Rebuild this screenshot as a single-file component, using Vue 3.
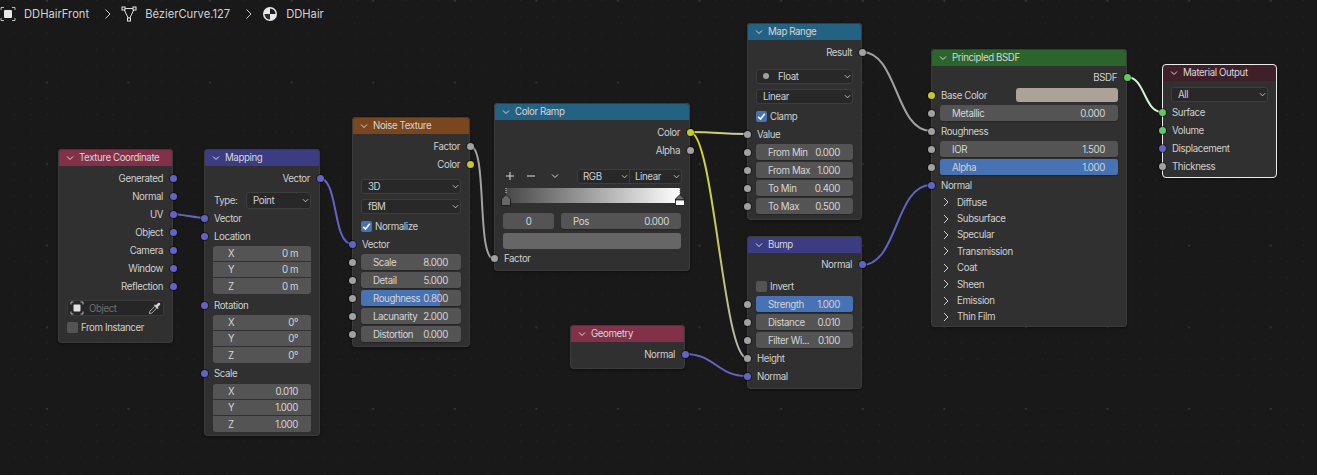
<script setup>
const out = (label, s = 'vec') => ({ t: 'out', label, s })
const inp = (label, s = 'grey') => ({ t: 'in', label, s })
const num = (label, val, s = 'grey', fill = 0) => ({ t: 'field', label, val, s, fill })
const sp = (h) => ({ t: 'sp', h })
const sel = (label, dot = false) => ({ t: 'select', label, dot })
const check = (label, on) => ({ t: 'check', label, on })
const xyz = (x, y, z) => ({ t: 'group', items: [['X', x], ['Y', y], ['Z', z]] })
const panel = (label) => ({ t: 'panel', label })

const nodes = [
  {
    title: 'Texture Coordinate', kind: 'input', x: 58, y: 149, w: 115,
    rows: [
      sp(3), out('Generated'), out('Normal'), out('UV'), out('Object'), out('Camera'), out('Window'), out('Reflection'),
      sp(5), { t: 'object' }, sp(2), check('From Instancer', false), sp(7)
    ]
  },
  {
    title: 'Mapping', kind: 'vector', x: 204, y: 149, w: 116,
    rows: [
      sp(3), out('Vector'), sp(4), { t: 'type' }, inp('Vector', 'vec'), inp('Location', 'vec'),
      sp(1), xyz('0 m', '0 m', '0 m'), sp(2), inp('Rotation', 'vec'),
      sp(1), xyz('0°', '0°', '0°'), sp(1), inp('Scale', 'vec'),
      sp(2), xyz('0.010', '1.000', '1.000'), sp(4)
    ]
  },
  {
    title: 'Noise Texture', kind: 'texture', x: 352, y: 117, w: 118,
    rows: [
      sp(3), out('Factor', 'grey'), out('Color', 'col'), sp(3), sel('3D'), sel('fBM'), sp(1), check('Normalize', true),
      inp('Vector', 'vec'), num('Scale', '8.000'), num('Detail', '5.000'), num('Roughness', '0.800', 'grey', 79),
      num('Lacunarity', '2.000'), num('Distortion', '0.000'), sp(4)
    ]
  },
  {
    title: 'Color Ramp', kind: 'convert', x: 494, y: 103, w: 196,
    rows: [sp(3), out('Color', 'col'), out('Alpha', 'grey'), sp(9), { t: 'ramp' }, inp('Factor'), sp(4)]
  },
  {
    title: 'Map Range', kind: 'convert', x: 747, y: 23, w: 115,
    rows: [
      sp(3), out('Result', 'grey'), sp(5), sel('Float', true), sel('Linear'), sp(1), check('Clamp', true), inp('Value'),
      num('From Min', '0.000'), num('From Max', '1.000'), num('To Min', '0.400'), num('To Max', '0.500'), sp(5)
    ]
  },
  {
    title: 'Geometry', kind: 'input', x: 570, y: 325, w: 115,
    rows: [sp(3), out('Normal'), sp(6)]
  },
  {
    title: 'Bump', kind: 'vector', x: 747, y: 236, w: 115,
    rows: [
      sp(2), out('Normal'), sp(4), check('Invert', false), num('Strength', '1.000', 'grey', 100),
      num('Distance', '0.010'), num('Filter Wi...', '0.100'), inp('Height'), inp('Normal', 'vec'), sp(4)
    ]
  },
  {
    title: 'Principled BSDF', kind: 'shader', x: 931, y: 49, w: 196,
    rows: [
      sp(2), out('BSDF', 'sh'), { t: 'color', label: 'Base Color' }, num('Metallic', '0.000'), inp('Roughness'),
      num('IOR', '1.500'), num('Alpha', '1.000', 'grey', 100), inp('Normal', 'vec'),
      panel('Diffuse'), panel('Subsurface'), panel('Specular'), panel('Transmission'),
      panel('Coat'), panel('Sheen'), panel('Emission'), panel('Thin Film'), sp(2)
    ]
  },
  {
    title: 'Material Output', kind: 'output', x: 1162, y: 64, w: 115, selected: true,
    rows: [
      sp(4), { t: 'plain', label: 'All' }, inp('Surface', 'sh'), inp('Volume', 'sh'),
      inp('Displacement', 'vec'), inp('Thickness'), sp(3)
    ]
  }
]

const wire = (x1, y1, x2, y2, d) => `M${x1} ${y1}C${x1 + d} ${y1} ${x2 - d} ${y2} ${x2} ${y2}`

const wires = [
  { d: wire(172, 214, 205, 218, 8), c: '#6363c7' },
  { d: wire(319, 178, 352, 244, 20), c: '#6363c7' },
  { d: wire(470, 146, 494, 259, 18), c: '#a1a1a1' },
  { d: wire(690, 132, 747, 358, 24), c: 'url(#yg)' },
  { d: wire(690, 132, 747, 134, 28), c: 'url(#yw)' },
  { d: wire(862, 52, 931, 131, 36), c: '#a1a1a1' },
  { d: wire(685, 354, 747, 376, 30), c: '#6363c7' },
  { d: wire(862, 265, 931, 185, 36), c: '#6363c7' },
  { d: wire(1127, 77, 1162, 112, 18), c: '#d4f2d4' }
]
</script>

<template>
  <div class="canvas">
    <div class="crumbs">
      <svg class="ic" viewBox="0 0 16 16" width="16" height="16" fill="none">
        <rect x="4" y="4" width="8" height="8" rx="1" fill="#e8e8e8" />
        <path d="M1 4V1.500H4M12 1.500H15V4M15 12V14.500H12M4 14.500H1V12" stroke="#bdbdbd" stroke-width="1" />
      </svg>
      <span class="crumb">DDHairFront</span>
      <svg class="sep" viewBox="0 0 8 12" width="8" height="12" fill="none"><path d="M1.500 1.500L6 6L1.500 10.500" stroke="#c8c8c8" stroke-width="1" /></svg>
      <svg class="ic" viewBox="0 0 16 16" width="16" height="16" fill="none">
        <path d="M2.500 2.500H13.500L8 13.500Z" stroke="#dcdcdc" stroke-width="1" />
        <rect x="1" y="1" width="3" height="3" fill="#1a1a1a" stroke="#e8e8e8" />
        <rect x="12" y="1" width="3" height="3" fill="#1a1a1a" stroke="#e8e8e8" />
        <rect x="6.500" y="12" width="3" height="3" fill="#1a1a1a" stroke="#e8e8e8" />
      </svg>
      <span class="crumb">BézierCurve.127</span>
      <svg class="sep" viewBox="0 0 8 12" width="8" height="12" fill="none"><path d="M1.500 1.500L6 6L1.500 10.500" stroke="#c8c8c8" stroke-width="1" /></svg>
      <svg class="ic" viewBox="0 0 16 16" width="16" height="16">
        <circle cx="8" cy="8" r="7" fill="#e8e8e8" />
        <path d="M8 2.500A5.500 5.500 0 0 1 13.500 8H8Z" fill="#1c1c1c" />
        <path d="M8 8H2.500A5.500 5.500 0 0 0 8 13.500Z" fill="#2c2c2c" />
      </svg>
      <span class="crumb">DDHair</span>
    </div>

    <svg class="wires" width="1317" height="475" fill="none">
      <defs>
        <linearGradient id="yg" gradientUnits="userSpaceOnUse" x1="690" y1="132" x2="747" y2="358">
          <stop offset="0" stop-color="#d6d62e" />
          <stop offset="0.55" stop-color="#c4c46a" />
          <stop offset="1" stop-color="#b4b4b4" />
        </linearGradient>
        <linearGradient id="yw" gradientUnits="userSpaceOnUse" x1="690" y1="132" x2="747" y2="134">
          <stop offset="0" stop-color="#d6d62e" />
          <stop offset="1" stop-color="#c8c8c8" />
        </linearGradient>
      </defs>
      <path v-for="(w, i) in wires" :key="i" :d="w.d" :stroke="w.c" stroke-width="2" />
    </svg>

    <div
      v-for="n in nodes"
      :key="n.title"
      class="node"
      :class="{ selected: n.selected }"
      :style="{ left: n.x + 'px', top: n.y + 'px', width: n.w + 'px' }"
    >
      <div class="head" :class="n.kind">
        <svg class="chev" viewBox="0 0 8 8" width="8" height="8" fill="none"><path d="M1 2.500L4 5.500L7 2.500" stroke="#d8d8d8" stroke-width="1" /></svg>
        <span>{{ n.title }}</span>
      </div>
      <div class="body">
        <template v-for="(r, i) in n.rows" :key="i">
          <div v-if="r.t === 'sp'" :style="{ height: r.h + 'px' }"></div>

          <div v-else-if="r.t === 'out'" class="row right">
            <span>{{ r.label }}</span>
            <i class="sock out" :class="r.s"></i>
          </div>

          <div v-else-if="r.t === 'in'" class="row">
            <i class="sock in" :class="r.s"></i>
            <span class="lab">{{ r.label }}</span>
          </div>

          <div v-else-if="r.t === 'field'" class="row">
            <i class="sock in" :class="r.s"></i>
            <div class="num">
              <div v-if="r.fill" class="fill" :style="{ width: r.fill + '%' }"></div>
              <span class="k">{{ r.label }}</span>
              <span class="v">{{ r.val }}</span>
            </div>
          </div>

          <div v-else-if="r.t === 'group'" class="group">
            <div v-for="it in r.items" :key="it[0]" class="num joined">
              <span class="k">{{ it[0] }}</span>
              <span class="v">{{ it[1] }}</span>
            </div>
          </div>

          <div v-else-if="r.t === 'select'" class="row tall">
            <div class="sel">
              <i v-if="r.dot" class="dot"></i>
              <span>{{ r.label }}</span>
              <svg class="down" viewBox="0 0 8 8" width="7" height="7" fill="none"><path d="M1 2.500L4 5.500L7 2.500" stroke="#cfcfcf" stroke-width="1" /></svg>
            </div>
          </div>

          <div v-else-if="r.t === 'plain'" class="row">
            <div class="sel">
              <span>{{ r.label }}</span>
              <svg class="down" viewBox="0 0 8 8" width="7" height="7" fill="none"><path d="M1 2.500L4 5.500L7 2.500" stroke="#cfcfcf" stroke-width="1" /></svg>
            </div>
          </div>

          <div v-else-if="r.t === 'type'" class="row type">
            <span class="lab">Type:</span>
            <div class="sel">
              <span>Point</span>
              <svg class="down" viewBox="0 0 8 8" width="7" height="7" fill="none"><path d="M1 2.500L4 5.500L7 2.500" stroke="#cfcfcf" stroke-width="1" /></svg>
            </div>
          </div>

          <div v-else-if="r.t === 'check'" class="row checkrow">
            <div class="box" :class="{ on: r.on }">
              <svg v-if="r.on" viewBox="0 0 11 11" width="11" height="11" fill="none"><path d="M2.200 5.800L4.500 8L8.800 2.800" stroke="#fff" stroke-width="1.600" /></svg>
            </div>
            <span>{{ r.label }}</span>
          </div>

          <div v-else-if="r.t === 'object'" class="objfield">
            <svg viewBox="0 0 14 14" width="14" height="14" fill="none">
              <rect x="3.500" y="3.500" width="7" height="7" rx="1" fill="#e0e0e0" />
              <path d="M1 3.500V1H3.500M10.500 1H13V3.500M13 10.500V13H10.500M3.500 13H1V10.500" stroke="#b5b5b5" />
            </svg>
            <span>Object</span>
            <svg class="drop" viewBox="0 0 14 14" width="13" height="13" fill="none">
              <path d="M1.500 12.500L2 10L7.500 4.500L9.500 6.500L4 12Z" stroke="#b8b8b8" />
              <path d="M6.500 3.500L10.500 7.500L11.500 6.500L10.500 5.500L12.800 3.200A1.400 1.400 0 0 0 10.800 1.200L8.500 3.500L7.500 2.500Z" fill="#d4d4d4" />
            </svg>
          </div>

          <div v-else-if="r.t === 'color'" class="row colorrow">
            <i class="sock in col"></i>
            <span class="lab">{{ r.label }}</span>
            <div class="swatch"></div>
          </div>

          <div v-else-if="r.t === 'panel'" class="panel">
            <svg viewBox="0 0 6 10" width="6" height="10" fill="none"><path d="M1 1L5 5L1 9" stroke="#cfcfcf" stroke-width="1" /></svg>
            <span>{{ r.label }}</span>
          </div>

          <div v-else-if="r.t === 'ramp'" class="ramp">
            <div class="tools">
              <svg class="tool" viewBox="0 0 21 16" width="21" height="16" fill="none"><path d="M3 8H11M7 4V12" stroke="#dcdcdc" stroke-width="1" /></svg>
              <svg class="tool" viewBox="0 0 21 16" width="21" height="16" fill="none"><path d="M3 8H11" stroke="#dcdcdc" stroke-width="1" /></svg>
              <svg class="tooldown" viewBox="0 0 8 8" width="8" height="8" fill="none"><path d="M1 2.500L4 5.500L7 2.500" stroke="#d0d0d0" stroke-width="1" /></svg>
              <div class="pair">
                <div class="sel half">
                  <span>RGB</span>
                  <svg class="down" viewBox="0 0 8 8" width="7" height="7" fill="none"><path d="M1 2.500L4 5.500L7 2.500" stroke="#cfcfcf" stroke-width="1" /></svg>
                </div>
                <div class="sel half">
                  <span>Linear</span>
                  <svg class="down" viewBox="0 0 8 8" width="7" height="7" fill="none"><path d="M1 2.500L4 5.500L7 2.500" stroke="#cfcfcf" stroke-width="1" /></svg>
                </div>
              </div>
            </div>
            <div class="grad">
              <svg class="stop first" viewBox="0 0 10 18" width="10" height="18">
                <path d="M5 0V6" stroke="#ddd" stroke-width="1" stroke-dasharray="1 1" />
                <path d="M5 6.500L9.500 11V17.500H0.500V11Z" fill="#686868" stroke="#111" stroke-width="0.800" />
              </svg>
              <svg class="stop last" viewBox="0 0 10 18" width="10" height="18">
                <path d="M5 0V6" stroke="#777" stroke-width="1" stroke-dasharray="1 1" />
                <path d="M5 6.500L9.500 11V12H0.500V11Z" fill="#686868" stroke="#111" stroke-width="0.800" />
                <rect x="0.500" y="12" width="9" height="5.500" fill="#fff" stroke="#111" stroke-width="0.800" />
              </svg>
            </div>
            <div class="posrow">
              <div class="idx">0</div>
              <div class="num pos"><span class="k">Pos</span><span class="v">0.000</span></div>
            </div>
            <div class="bar"></div>
          </div>
        </template>
      </div>
    </div>
  </div>
</template>

<style>
html, body {
  margin: 0;
  background: #191919;
}
</style>

<style scoped>
.canvas {
  position: relative;
  width: 1317px;
  height: 475px;
  overflow: hidden;
  font-family: Inter, "Liberation Sans", sans-serif;
  font-size: 9.700px;
  letter-spacing: -0.400px;
  color: #cfcfcf;
  background-color: #191919;
  background-image:
    radial-gradient(circle at 47px 0.800px, #333 0.900px, transparent 1.100px),
    radial-gradient(circle at 15px 0.500px, #262626 0.500px, transparent 0.800px);
  background-size: 81.600px 81.600px, 16.320px 16.320px;
}

.crumbs {
  position: absolute;
  left: 0;
  top: 6px;
  display: flex;
  align-items: center;
  height: 16px;
  font-size: 11.200px;
  letter-spacing: 0;
  color: #d2d2d2;
}

.crumb {
  margin-left: 8px;
}

.sep {
  margin: 0 9px 0 15px;
}

.wires {
  position: absolute;
  left: 0;
  top: 0;
}

.node {
  position: absolute;
  border-radius: 4px;
  background: #303030;
  outline: 1px solid #3c3c3c;
  outline-offset: -1px;
  box-shadow: 0 1px 3px rgba(0, 0, 0, 0.4);
}

.node.selected {
  outline-color: #ededed;
}

.head {
  display: flex;
  align-items: center;
  height: 17px;
  border-radius: 4px 4px 0 0;
  color: #d6d6d6;
}

.chev {
  margin: 0 5px 0 8px;
}

.input { background: #83314a; }
.vector { background: #3c3c83; }
.texture { background: #79461d; }
.convert { background: #246283; }
.shader { background: #2b652b; }
.output { background: #3f1f29; }

.body {
  display: flex;
  flex-direction: column;
  padding: 0 9px;
}

.row {
  position: relative;
  display: flex;
  align-items: center;
  height: 18px;
  flex: none;
}

.row.right {
  justify-content: flex-end;
  padding-right: 1px;
}

.row.tall {
  height: 20px;
}

.lab {
  padding-left: 1px;
}

.sock {
  position: absolute;
  top: 5.500px;
  width: 7px;
  height: 7px;
  border-radius: 50%;
  box-shadow: 0 0 0 1px rgba(0, 0, 0, 0.45);
}

.sock.in { left: -12.500px; }
.sock.out { right: -12.500px; }
.vec { background: #6363c7; }
.grey { background: #a1a1a1; }
.col { background: #c7c729; }
.sh { background: #63c763; }

.num {
  position: relative;
  display: flex;
  align-items: center;
  justify-content: space-between;
  flex: 1;
  height: 16px;
  padding: 0 13px 0 12px;
  border-radius: 3px;
  background: #545454;
  overflow: hidden;
  box-shadow: 0 1px 1px rgba(0, 0, 0, 0.25);
  color: #d4d4d4;
}

.k, .v {
  position: relative;
  white-space: nowrap;
}

.fill {
  position: absolute;
  left: 0;
  top: 0;
  bottom: 0;
  background: #4772b3;
}

.group {
  display: flex;
  flex-direction: column;
  flex: none;
  border-radius: 3px;
  overflow: hidden;
}

.num.joined {
  flex: none;
  padding-left: 15px;
  border-radius: 0;
  box-shadow: none;
  border-bottom: 1px solid #303030;
  box-sizing: border-box;
}

.num.joined:last-child {
  border-bottom: 0;
}

.sel {
  display: flex;
  align-items: center;
  flex: 1;
  height: 15px;
  padding: 0 0 0 7px;
  border-radius: 3px;
  background: #282828;
  box-shadow: inset 0 0 0 1px #3d3d3d;
  color: #d0d0d0;
}

.down {
  margin-left: auto;
  margin-right: 2px;
}

.dot {
  width: 6px;
  height: 6px;
  margin: 0 9px 0 0;
  border-radius: 50%;
  background: #a1a1a1;
}

.type {
  gap: 9px;
}

.type .lab {
  width: 23px;
}

.type .sel {
  height: 17px;
}

.checkrow {
  gap: 3px;
}

.box {
  width: 11px;
  height: 11px;
  flex: none;
  border-radius: 2px;
  background: #545454;
}

.box.on {
  background: #4772b3;
}

.box svg {
  display: block;
}

.objfield {
  display: flex;
  align-items: center;
  height: 16px;
  padding: 0 3px;
  border-radius: 3px;
  background: #262626;
  box-shadow: inset 0 0 0 1px #3a3a3a;
  color: #6f6f6f;
}

.objfield span {
  margin-left: 5px;
}

.drop {
  margin-left: auto;
}

.colorrow {
  justify-content: space-between;
}

.swatch {
  width: 102px;
  height: 14px;
  border-radius: 3px;
  background: #aca297;
}

.panel {
  display: flex;
  align-items: center;
  gap: 8px;
  height: 16.400px;
  padding-left: 3px;
  flex: none;
}

.ramp {
  display: flex;
  flex-direction: column;
}

.tools {
  display: flex;
  align-items: center;
  height: 16px;
}

.tool {
  flex: none;
}

.tooldown {
  margin-left: 6px;
}

.pair {
  display: flex;
  margin-left: auto;
  margin-right: -1px;
  width: 105px;
}

.sel.half {
  padding-left: 6px;
}

.sel.half:first-child {
  border-radius: 3px 0 0 3px;
}

.sel.half:last-child {
  border-radius: 0 3px 3px 0;
  margin-left: -1px;
}

.grad {
  position: relative;
  height: 15px;
  margin: 4px 1px 10px 3px;
  background: linear-gradient(90deg, #484848, #fff);
}

.stop {
  position: absolute;
  top: 0;
}

.stop.first {
  left: -5px;
}

.stop.last {
  right: -5px;
}

.posrow {
  display: flex;
  gap: 7px;
}

.idx {
  display: flex;
  align-items: center;
  justify-content: center;
  width: 51px;
  height: 16px;
  border-radius: 3px;
  background: #545454;
  color: #d4d4d4;
}

.num.pos {
  padding-right: 12px;
}

.bar {
  height: 16px;
  margin-top: 4px;
  border-radius: 3px;
  background: #666;
}
</style>
